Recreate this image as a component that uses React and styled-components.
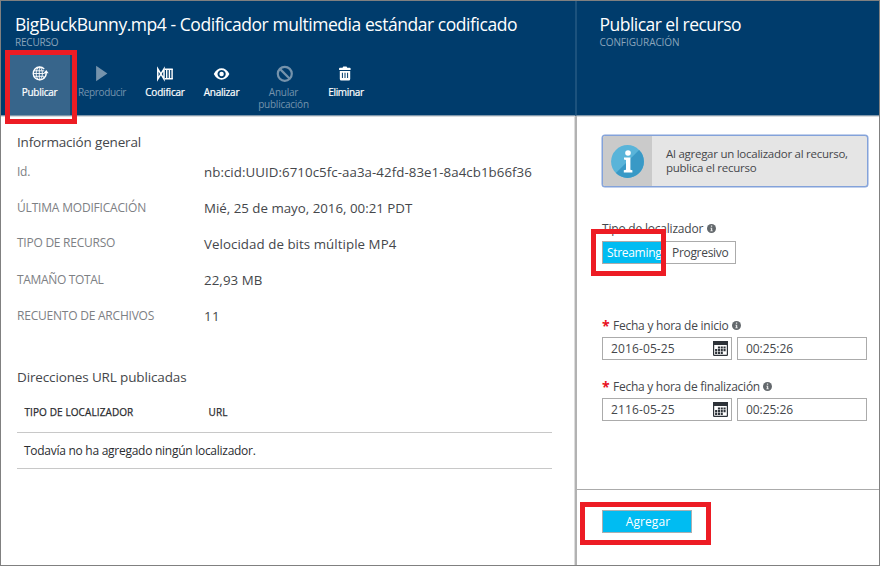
import React from "react";
import styled, { createGlobalStyle } from "styled-components";

const GlobalStyle = createGlobalStyle`
  * { box-sizing: border-box; }
  body { margin: 0; background: #fff; font-family: "Open Sans", "Noto Sans", sans-serif; }
`;

const Window = styled.div`
  position: relative;
  width: 880px;
  height: 566px;
  border: 1px solid #808080;
  display: grid;
  grid-template-columns: 574px 1fr;
  overflow: hidden;
  white-space: nowrap;
  color: #45474b;
`;

const Blade = styled.section`
  display: flex;
  flex-direction: column;
  min-width: 0;
`;

const Header = styled.header`
  height: 115px;
  flex: none;
  padding-top: 11px;
  padding-left: ${(p) => p.$inset}px;
  background: #003c6c;
  border-bottom: 1px solid #7f97ab;
  box-shadow: 0 1px 0 #d9dcdf;
  ${(p) => p.$divided && "border-left: 2px solid #1c527d;"}
`;

const Title = styled.h1`
  margin: 0;
  font-size: 17.5px;
  font-weight: 400;
  line-height: 24px;
  letter-spacing: ${(p) => p.$track}px;
  color: #fff;
`;

const Subtitle = styled.div`
  font-size: 10px;
  line-height: 13px;
  letter-spacing: ${(p) => p.$track}px;
  color: #8ba5bb;
`;

const Toolbar = styled.nav`
  display: flex;
  margin: 6px 0 0 -6px;
`;

const Tool = styled.div`
  width: ${(p) => p.$w}px;
  height: 60px;
  flex: none;
  padding-top: 10px;
  display: flex;
  flex-direction: column;
  align-items: center;
  gap: 4px;
  font-size: 10px;
  line-height: 12px;
  letter-spacing: ${(p) => p.$track}px;
  text-align: center;
  color: ${(p) => (p.$off ? "#7593ac" : "#fff")};
  background: ${(p) => (p.$active ? "#37658b" : "transparent")};
  ${(p) => p.$active && "border-right: 2px solid #124a76;"}
  ${(p) => !p.$off && "-webkit-text-stroke: 0.2px #fff;"}
  svg { display: block; height: 17px; width: 18px; flex: none; }
`;

const Body = styled.div`
  flex: 1;
  display: flex;
  flex-direction: column;
  padding-left: ${(p) => p.$inset}px;
  ${(p) => p.$divided && "border-left: 2px solid #b2b2b2; box-shadow: -1px 0 0 #dcdcdc;"}
`;

const Heading = styled.h2`
  margin: ${(p) => p.$top}px 0 0;
  font-size: 13.5px;
  font-weight: 400;
  line-height: 20px;
  letter-spacing: ${(p) => p.$track}px;
`;

const Properties = styled.dl`
  margin: 2px 0 0;
  display: grid;
  grid-template-columns: 187px 1fr;
  grid-auto-rows: 36px;
`;

const Term = styled.dt`
  font-size: 12px;
  line-height: ${(p) => (p.$raised ? 33 : 35)}px;
  letter-spacing: ${(p) => p.$track}px;
  color: #7d8084;
`;

const Value = styled.dd`
  margin: 0;
  font-size: 13.3px;
  line-height: 36px;
  letter-spacing: ${(p) => p.$track}px;
`;

const Table = styled.div`
  width: 535px;
  margin-top: 5px;
  color: #2b2d31;
`;

const HeadRow = styled.div`
  height: 41px;
  padding: 0 0 0 7.5px;
  display: grid;
  grid-template-columns: 184px 1fr;
  border-bottom: 1px solid #c8c8c8;
  font-size: 10px;
  line-height: 40px;
  letter-spacing: 0.1px;
  -webkit-text-stroke: 0.25px #2b2d31;
`;

const EmptyRow = styled.div`
  height: 36px;
  padding-left: 7px;
  border-bottom: 1px solid #c8c8c8;
  font-size: 12px;
  line-height: 36px;
  letter-spacing: -0.27px;
`;

const Notice = styled.div`
  display: flex;
  width: 266px;
  height: 52px;
  margin-top: 19px;
  border: 1.5px solid #83a2da;
  border-radius: 3px;
  background: #e5e5e5;
  overflow: hidden;
  box-shadow: 0 0 0 0.5px #83a2da;
`;

const NoticeIcon = styled.div`
  width: 49px;
  flex: none;
  display: flex;
  align-items: center;
  justify-content: center;
  background: #cacaca;
`;

const NoticeText = styled.p`
  margin: 11px 0 0 14px;
  font-size: 11.5px;
  line-height: 14px;
  letter-spacing: -0.26px;
`;

const Field = styled.div`
  margin-top: ${(p) => p.$top}px;
`;

const Label = styled.div`
  display: flex;
  align-items: center;
  height: 19px;
  font-size: 12px;
  letter-spacing: ${(p) => p.$track}px;
  svg { margin-left: 3.5px; }
`;

const Required = styled.span`
  width: 11px;
  font-family: "Noto Sans", sans-serif;
  font-size: 14px;
  font-weight: 700;
  line-height: 16px;
  letter-spacing: 0;
  color: #e81123;
`;

const Segments = styled.div`
  display: flex;
  margin-top: 3px;
`;

const Segment = styled.div`
  width: ${(p) => p.$w}px;
  height: 23px;
  padding-left: ${(p) => p.$pad}px;
  border: 1px solid #ababab;
  ${(p) => p.$last && "border-left: 0;"}
  background: ${(p) => (p.$on ? "#00bcf2" : "#fff")};
  color: ${(p) => (p.$on ? "#fff" : "#45474b")};
  font-size: 12px;
  line-height: 22px;
  letter-spacing: -0.31px;
`;

const Inputs = styled.div`
  display: flex;
  gap: 5px;
  margin-top: 2px;
`;

const Input = styled.div`
  width: 130px;
  height: 23px;
  padding: 0 3px 0 8px;
  display: flex;
  align-items: center;
  justify-content: space-between;
  border: 1px solid #ababab;
  font-size: 12px;
  letter-spacing: ${(p) => p.$track}px;
`;

const Footer = styled.footer`
  margin: auto 0 0 -25px;
  height: 76px;
  padding: 20px 0 0 25px;
  border-top: 1px solid #ababab;
`;

const Submit = styled.div`
  width: 90px;
  height: 23px;
  padding-left: 2px;
  border: 1px solid #a9afb2;
  background: #00bcf2;
  color: #fff;
  font-size: 12px;
  line-height: 22px;
  letter-spacing: 0.1px;
  text-align: center;
`;

const Highlight = styled.div`
  position: absolute;
  left: ${(p) => p.$x - 1}px;
  top: ${(p) => p.$y - 1}px;
  width: ${(p) => p.$w}px;
  height: ${(p) => p.$h}px;
  border: 5px solid #ed1c24;
`;

const Globe = () => (
  <svg viewBox="0 0 18 17" fill="none" stroke="#fff" strokeWidth="0.9">
    <path d="M13.2 4A6.4 6.4 0 1 0 13.6 12.5" strokeWidth="1.4" />
    <path d="M8.3 2v13M3 5.8h10.2M2 8.5h11.5M3 11.3h10.2" />
    <ellipse cx="8.3" cy="8.5" rx="3.1" ry="6.3" />
    <path d="M12.6 13c1.9-.9 2.6-2.6 2.6-5" strokeWidth="1.4" />
    <path d="M12.6 8.3l2.7-3.4L17.6 8.3z" fill="#fff" stroke="none" />
  </svg>
);
const Play = () => (
  <svg viewBox="0 0 18 17"><path d="M3.1.8v15.4L14.4 8.5z" fill="#7593ac" /></svg>
);
const Encode = () => (
  <svg viewBox="0 0 18 17" fill="none" stroke="#fff">
    <path d="M1.8 3.9v10.2l6.2-10.2v10.2z" strokeWidth="1.5" />
    <path d="M8.6 4.2H16.8M8.6 13.8H16.8" strokeWidth="1.5" />
    <path d="M10.7 4v10M13.4 4v10M16.1 4v10" strokeWidth="1.4" />
  </svg>
);
const Eye = () => (
  <svg viewBox="0 0 18 17">
    <path fillRule="evenodd" fill="#fff" d="M.8 9C4.4 1.3 12.8 1.3 16.4 9 12.8 16.5 4.4 16.5.8 9zM8.6 4.9a4.1 4.1 0 1 0 .01 0z" />
    <circle cx="8.6" cy="9" r="2.2" fill="#fff" />
  </svg>
);
const Ban = () => (
  <svg viewBox="0 0 18 17" fill="none" stroke="#7593ac" strokeWidth="2.2">
    <circle cx="9.8" cy="8.8" r="7" />
    <path d="M4.9 3.9l9.8 9.8" />
  </svg>
);
const Trash = () => (
  <svg viewBox="0 0 18 17">
    <path fill="#fff" d="M2.1 3.4q0-.7.8-.7h2.6l.8-1.2h3.2l.8 1.2h2.5q.8 0 .8.7V5H2.1z" />
    <path fill="#fff" fillRule="evenodd" d="M2.8 6h10.4v8.1q0 1.5-1.5 1.5H4.3q-1.5 0-1.5-1.5zM4.9 7.8v5.3h1V7.8zM7.5 7.8v5.3h1V7.8zM10.1 7.8v5.3h1V7.8z" />
  </svg>
);
const InfoDot = () => (
  <svg width="9" height="9" viewBox="0 0 9 9">
    <circle cx="4.5" cy="4.5" r="4.5" fill="#63686c" />
    <path d="M3.9 1.6h1.3v1.2H3.9zM3.4 3.7h1.8v2.7h.6v.9H3.3v-.9h.6V4.5h-.5z" fill="#e6e6e6" />
  </svg>
);
const Calendar = () => (
  <svg width="15" height="15" viewBox="0 0 15 15">
    <rect x=".6" y=".6" width="13.8" height="13.8" rx=".6" fill="#fff" stroke="#2d3238" strokeWidth="1.2" />
    <path d="M0 0h15v4H0z" fill="#2d3238" />
    <path d="M4.9 5.4h2.1v2.1H4.9zM7.7 5.4h2.1v2.1H7.7zM10.5 5.4h2.1v2.1h-2.1zM2.1 8.1h2.1v2.1H2.1zM4.9 8.1h2.1v2.1H4.9zM7.7 8.1h2.1v2.1H7.7zM10.5 8.1h2.1v2.1h-2.1zM2.1 10.8h2.1v2.1H2.1zM4.9 10.8h2.1v2.1H4.9zM7.7 10.8h2.1v2.1H7.7z" fill="#2d3238" />
  </svg>
);
const InfoBadge = () => (
  <svg width="33" height="33" viewBox="0 0 33 33">
    <circle cx="16.5" cy="16.5" r="16.4" fill="#59b4d9" />
    <path d="M28.1 4.9A16.4 16.4 0 0 1 4.9 28.1z" fill="#3999c6" />
    <circle cx="17" cy="8" r="2.8" fill="#fff" />
    <path d="M13 12.6h6.4v12.2l2 .5v2.2h-8.6v-2.2l2.2-.5V15l-2-.4z" fill="#fff" />
  </svg>
);

const tools = [
  { lines: ["Publicar"], Icon: Globe, w: 63, track: -0.27, active: true },
  { lines: ["Reproducir"], Icon: Play, w: 60, track: -0.36, off: true },
  { lines: ["Codificar"], Icon: Encode, w: 66, track: -0.2 },
  { lines: ["Analizar"], Icon: Eye, w: 47, track: -0.24 },
  { lines: ["Anular", "publicación"], Icon: Ban, w: 77, track: -0.24, off: true },
  { lines: ["Eliminar"], Icon: Trash, w: 48, track: -0.32 },
];

const properties = [
  { term: "Id.", tt: -0.28, value: "nb:cid:UUID:6710c5fc-aa3a-42fd-83e1-8a4cb1b66f36", vt: 0.055 },
  { term: "ÚLTIMA MODIFICACIÓN", tt: -0.19, value: "Mié, 25 de mayo, 2016, 00:21 PDT", vt: 0 },
  { term: "TIPO DE RECURSO", tt: -0.25, value: "Velocidad de bits múltiple MP4", vt: 0.06, raised: true },
  { term: "TAMAÑO TOTAL", tt: -0.33, value: "22,93 MB", vt: 0.08 },
  { term: "RECUENTO DE ARCHIVOS", tt: -0.22, value: "11", vt: 0.3 },
];

const dates = [
  { label: "Fecha y hora de inicio", date: "2016-05-25", top: 52, track: -0.24 },
  { label: "Fecha y hora de finalización", date: "2116-05-25", top: 17, track: -0.26 },
];

export default function App() {
  return (
    <>
      <GlobalStyle />
      <Window>
        <Blade>
          <Header $inset={14}>
            <Title $track={-0.45}>BigBuckBunny.mp4 - Codificador multimedia estándar codificado</Title>
            <Subtitle $track={-0.21}>RECURSO</Subtitle>
            <Toolbar>
              {tools.map(({ lines, Icon, w, track, active, off }) => (
                <Tool key={lines[0]} $w={w} $track={track} $active={active} $off={off}>
                  <Icon />
                  <span>{lines[0]}{lines[1] && <><br />{lines[1]}</>}</span>
                </Tool>
              ))}
            </Toolbar>
          </Header>
          <Body $inset={16}>
            <Heading $top={16} $track={-0.17}>Información general</Heading>
            <Properties>
              {properties.map((p) => (
                <React.Fragment key={p.term}>
                  <Term $track={p.tt} $raised={p.raised}>{p.term}</Term>
                  <Value $track={p.vt}>{p.value}</Value>
                </React.Fragment>
              ))}
            </Properties>
            <Heading $top={33} $track={-0.14}>Direcciones URL publicadas</Heading>
            <Table>
              <HeadRow><span>TIPO DE LOCALIZADOR</span><span>URL</span></HeadRow>
              <EmptyRow>Todavía no ha agregado ningún localizador.</EmptyRow>
            </Table>
          </Body>
        </Blade>
        <Blade>
          <Header $inset={22.5} $divided>
            <Title $track={-0.53}>Publicar el recurso</Title>
            <Subtitle $track={-0.08}>CONFIGURACIÓN</Subtitle>
          </Header>
          <Body $inset={25} $divided>
            <Notice>
              <NoticeIcon><InfoBadge /></NoticeIcon>
              <NoticeText>Al agregar un localizador al recurso,<br />publica el recurso</NoticeText>
            </Notice>
            <Field $top={32}>
              <Label $track={-0.2}>Tipo de localizador<InfoDot /></Label>
              <Segments>
                <Segment $w={64} $pad={4} $on>Streaming</Segment>
                <Segment $w={70} $pad={6} $last>Progresivo</Segment>
              </Segments>
            </Field>
            {dates.map((d) => (
              <Field key={d.label} $top={d.top}>
                <Label $track={d.track}><Required>*</Required>{d.label}<InfoDot /></Label>
                <Inputs>
                  <Input $track={0.12}>{d.date}<Calendar /></Input>
                  <Input $track={-0.06}>00:25:26</Input>
                </Inputs>
              </Field>
            ))}
            <Footer><Submit>Agregar</Submit></Footer>
          </Body>
        </Blade>
        <Highlight $x={5} $y={50} $w={72} $h={74} />
        <Highlight $x={591} $y={229} $w={75} $h={47} />
        <Highlight $x={580} $y={502} $w={131} $h={43} />
      </Window>
    </>
  );
}
